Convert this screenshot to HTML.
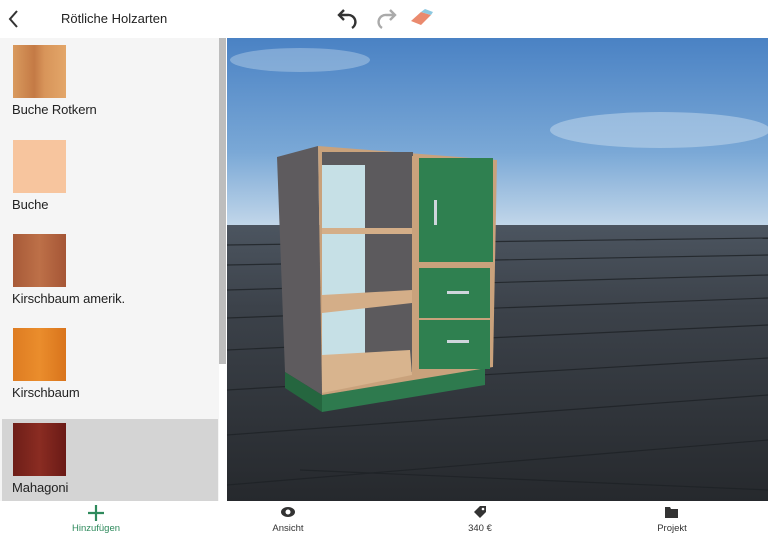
<!DOCTYPE html>
<html><head><meta charset="utf-8"><style>
*{margin:0;padding:0;box-sizing:border-box}
body{width:768px;height:540px;overflow:hidden;background:#fff;font-family:"Liberation Sans",sans-serif;position:relative}
.abs{position:absolute}
.sw{position:absolute;left:13px;width:53px;height:53px}
.lb{position:absolute;left:12px;font-size:13px;color:#222;letter-spacing:-0.1px}
.nav{position:absolute;font-size:9.5px;color:#333;text-align:center;width:120px;top:523px}
</style></head><body>
<!-- header -->
<svg class="abs" style="left:0;top:0" width="460" height="38">
<path d="M17 11 L10 19 L17 27" stroke="#333" stroke-width="2" fill="none"/>
<path d="M344 10 L339 15 L344 20 M339 15 H348 A7 7 0 0 1 352 28" stroke="#333" stroke-width="2.4" fill="none"/>
<path d="M390 10 L395 15 L390 20 M395 15 H386 A7 7 0 0 0 382 28" stroke="#aaa" stroke-width="2.4" fill="none"/>
<path d="M411 21 L421 12 L431 15 L421 25 Z" fill="#ea8a6e"/>
<path d="M421 12 L425 9 L433 12 L431 15 Z" fill="#8cc8e0"/>
</svg>
<div class="abs" style="left:61px;top:11px;font-size:13px;color:#222">Rötliche Holzarten</div>
<!-- sidebar -->
<div class="abs" style="left:0;top:38px;width:219px;height:463px;background:#f5f5f5"></div>
<div class="abs" style="left:219px;top:38px;width:7px;height:326px;background:#bdbdbd"></div>
<div class="abs" style="left:2px;top:419px;width:216px;height:82px;background:#d4d4d4"></div>
<div class="sw" style="top:45px;background:linear-gradient(90deg,#d99a5e,#c47a45 40%,#d8955a 60%,#e3a669)"></div>
<div class="lb" style="top:102px">Buche Rotkern</div>
<div class="sw" style="top:140px;background:#f7c59e"></div>
<div class="lb" style="top:197px">Buche</div>
<div class="sw" style="top:234px;background:linear-gradient(90deg,#a75a38,#bd7048,#a55636)"></div>
<div class="lb" style="top:291px">Kirschbaum amerik.</div>
<div class="sw" style="top:328px;background:linear-gradient(90deg,#de7c22,#ea8d2c,#d9741c)"></div>
<div class="lb" style="top:385px">Kirschbaum</div>
<div class="sw" style="top:423px;background:linear-gradient(90deg,#6e1e18,#8a2c22,#6a1a16)"></div>
<div class="lb" style="top:480px">Mahagoni</div>
<!-- viewport -->
<svg class="abs" style="left:227px;top:38px" width="541" height="463" viewBox="227 38 541 463">
<defs>
<linearGradient id="sky" x1="0" y1="0" x2="0" y2="1"><stop offset="0" stop-color="#4a82c4"/><stop offset="0.6" stop-color="#7aa8d6"/><stop offset="1" stop-color="#c4d8ea"/></linearGradient>
<linearGradient id="fl" x1="0" y1="0" x2="0" y2="1"><stop offset="0" stop-color="#4c5560"/><stop offset="0.3" stop-color="#3c424a"/><stop offset="1" stop-color="#26292d"/></linearGradient>
</defs>
<rect x="227" y="38" width="541" height="190" fill="url(#sky)"/>
<ellipse cx="660" cy="130" rx="110" ry="18" fill="#c8dcee" opacity="0.5"/>
<ellipse cx="300" cy="60" rx="70" ry="12" fill="#c8dcee" opacity="0.4"/>
<rect x="227" y="225" width="541" height="276" fill="url(#fl)"/>
<g stroke="#1e2226" stroke-width="1.2" opacity="0.8">
<line x1="227" y1="245" x2="768" y2="238"/><line x1="227" y1="265" x2="768" y2="255"/>
<line x1="227" y1="290" x2="768" y2="275"/><line x1="227" y1="318" x2="768" y2="298"/>
<line x1="227" y1="350" x2="768" y2="325"/><line x1="227" y1="390" x2="768" y2="358"/>
<line x1="227" y1="435" x2="768" y2="395"/><line x1="227" y1="485" x2="768" y2="440"/>
<line x1="300" y1="470" x2="768" y2="490"/>
</g>
<!-- cabinet -->
<polygon points="277,157 318,146 322,395 285,372" fill="#5e5b5e"/>
<polygon points="285,372 322,395 322,412 485,385 485,367 322,395" fill="#2e7a4e"/>
<polygon points="285,372 322,395 322,412 285,388" fill="#25663f"/>
<polygon points="318,146 497,160 493,367 322,395" fill="#c9a27c"/>
<rect x="322" y="152" width="91" height="220" fill="#5c5a5d"/>
<rect x="322" y="165" width="43" height="190" fill="#c6e0e6"/>
<rect x="322" y="228" width="90" height="6" fill="#d4ae88"/>
<polygon points="322,295 412,290 412,303 322,313" fill="#d4ae88"/>
<polygon points="322,355 410,350 412,375 322,393" fill="#d8b48e"/>
<rect x="412" y="156" width="6" height="220" fill="#c9a27c"/>
<rect x="419" y="158" width="74" height="104" fill="#2f8050"/>
<rect x="434" y="200" width="3" height="25" fill="#cfd6dc"/>
<rect x="419" y="268" width="71" height="50" fill="#2f8050"/>
<rect x="419" y="320" width="71" height="49" fill="#2f8050"/>
<rect x="447" y="291" width="22" height="3" fill="#cfd6dc"/>
<rect x="447" y="340" width="22" height="3" fill="#cfd6dc"/>
</svg>
<!-- bottom nav -->
<svg class="abs" style="left:87px;top:504px" width="18" height="18"><path d="M9 1V17M1 9H17" stroke="#2e8a5c" stroke-width="2.2"/></svg>
<div class="nav" style="left:36px;color:#2e8a5c">Hinzufügen</div>
<svg class="abs" style="left:280px;top:506px" width="16" height="12"><ellipse cx="8" cy="6" rx="7" ry="5" fill="#333"/><circle cx="8" cy="6" r="2.5" fill="#fff"/></svg>
<div class="nav" style="left:228px">Ansicht</div>
<svg class="abs" style="left:472px;top:504px" width="16" height="16"><path d="M2 8 L8 2 H14 V8 L8 14 Z" fill="#333"/><circle cx="11" cy="5" r="1.3" fill="#fff"/></svg>
<div class="nav" style="left:420px">340 €</div>
<svg class="abs" style="left:664px;top:505px" width="16" height="14"><path d="M1 2 H6 L7 4 H14 V13 H1 Z" fill="#333"/></svg>
<div class="nav" style="left:612px">Projekt</div>
</body></html>
